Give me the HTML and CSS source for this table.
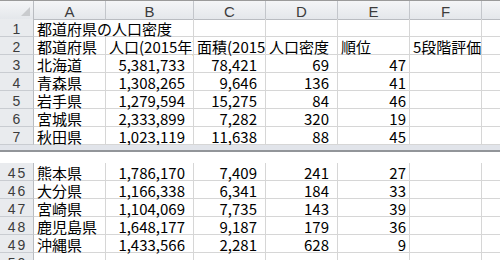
FILE: index.html
```html
<!DOCTYPE html>
<html lang="ja">
<head>
<meta charset="utf-8">
<link rel="stylesheet" href="styles.css">
</head>
<body>
<div class="sheet">
  <div class="hd corner"><svg class="tri" width="9" height="9" viewBox="0 0 9 9"><polygon points="9,0 9,9 0,9" fill="#c9cbce"/></svg></div>
  <div class="hd col">A</div><div class="hd col">B</div><div class="hd col">C</div><div class="hd col">D</div><div class="hd col">E</div><div class="hd col">F</div><div class="hd col last"></div>

  <div class="rh">1</div><div class="c span2">都道府県の人口密度</div><div class="c"></div><div class="c"></div><div class="c"></div><div class="c"></div><div class="c last"></div>
  <div class="rh">2</div><div class="c">都道府県</div><div class="c">人口(2015年)</div><div class="c">面積(2015年)</div><div class="c">人口密度</div><div class="c">順位</div><div class="c">5段階評価</div><div class="c last"></div>
  <div class="rh">3</div><div class="c">北海道</div><div class="c n">5,381,733</div><div class="c n">78,421</div><div class="c n">69</div><div class="c r">47</div><div class="c"></div><div class="c last"></div>
  <div class="rh">4</div><div class="c">青森県</div><div class="c n">1,308,265</div><div class="c n">9,646</div><div class="c n">136</div><div class="c r">41</div><div class="c"></div><div class="c last"></div>
  <div class="rh">5</div><div class="c">岩手県</div><div class="c n">1,279,594</div><div class="c n">15,275</div><div class="c n">84</div><div class="c r">46</div><div class="c"></div><div class="c last"></div>
  <div class="rh">6</div><div class="c">宮城県</div><div class="c n">2,333,899</div><div class="c n">7,282</div><div class="c n">320</div><div class="c r">19</div><div class="c"></div><div class="c last"></div>
  <div class="rh">7</div><div class="c">秋田県</div><div class="c n">1,023,119</div><div class="c n">11,638</div><div class="c n">88</div><div class="c r">45</div><div class="c"></div><div class="c last"></div>

  <div class="split"></div>

  <div class="rh">45</div><div class="c">熊本県</div><div class="c n">1,786,170</div><div class="c n">7,409</div><div class="c n">241</div><div class="c r">27</div><div class="c"></div><div class="c last"></div>
  <div class="rh">46</div><div class="c">大分県</div><div class="c n">1,166,338</div><div class="c n">6,341</div><div class="c n">184</div><div class="c r">33</div><div class="c"></div><div class="c last"></div>
  <div class="rh">47</div><div class="c">宮崎県</div><div class="c n">1,104,069</div><div class="c n">7,735</div><div class="c n">143</div><div class="c r">39</div><div class="c"></div><div class="c last"></div>
  <div class="rh">48</div><div class="c">鹿児島県</div><div class="c n">1,648,177</div><div class="c n">9,187</div><div class="c n">179</div><div class="c r">36</div><div class="c"></div><div class="c last"></div>
  <div class="rh">49</div><div class="c">沖縄県</div><div class="c n">1,433,566</div><div class="c n">2,281</div><div class="c n">628</div><div class="c r">9</div><div class="c"></div><div class="c last"></div>
  <div class="rh">50</div><div class="c"></div><div class="c"></div><div class="c"></div><div class="c"></div><div class="c"></div><div class="c"></div><div class="c last"></div>
</div>
</body>
</html>
```
FILE: styles.css
```css
html, body {
  margin: 0;
  padding: 0;
  background: #ffffff;
  width: 500px;
  height: 260px;
  overflow: hidden;
}
.sheet {
  display: grid;
  grid-template-columns: 34px 72px 88px 72px 72px 72px 72px 18px;
  grid-auto-rows: 18px;
  border-top: 1px solid #9a9a9a;
  font-family: "Noto Sans CJK JP", "Noto Sans", sans-serif;
  font-size: 15px;
  color: #000;
}
.sheet > div {
  box-sizing: border-box;
  white-space: nowrap;
  overflow-x: clip;
  overflow-y: visible;
}
.hd {
  height: 19px;
  background: linear-gradient(#f4f5f7, #e4e7eb);
  border-right: 1px solid #c3c6cb;
  border-bottom: 1px solid #b9bcc1;
  font-family: "Liberation Sans", Arial, sans-serif;
  font-size: 15px;
  color: #3c3c3c;
  text-align: center;
  padding-top: 4px;
  line-height: 14px;
}
.corner {
  display: flex;
  justify-content: flex-end;
  align-items: flex-end;
  padding: 0 3px 3px 0;
  border-right-color: #b9bcc1;
}
.tri { display: block; }
.hd.last { border-right: none; }
.rh {
  background: #e9ebee;
  border-right: 1px solid #b9bcc1;
  border-bottom: 1px solid #c9ccd1;
  font-family: "Liberation Sans", Arial, sans-serif;
  font-size: 14px;
  letter-spacing: 2px;
  color: #3c3c3c;
  text-align: center;
  padding: 4px 0 0 2px;
  line-height: 13px;
}
.c {
  border-right: 1px solid #d6d6d6;
  border-bottom: 1px solid #d6d6d6;
  padding: 3px 0 0 3px;
  line-height: 13px;
}
.c.last { border-right: none; }
.span2 { grid-column: span 2; }
.n {
  text-align: right;
  padding-right: 8px;
}
.r {
  text-align: right;
  padding-right: 3px;
}
.split {
  grid-column: 1 / -1;
  height: 7px;
  background: #e1e4ea;
  border-bottom: 2px solid #929599;
}
```
